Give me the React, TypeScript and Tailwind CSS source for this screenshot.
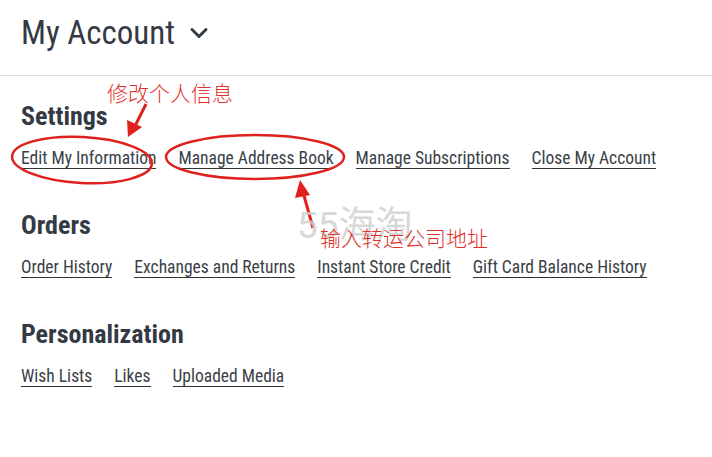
import { ChevronDown } from 'lucide-react';

const sections = [
  {
    title: 'Settings',
    links: ['Edit My Information', 'Manage Address Book', 'Manage Subscriptions', 'Close My Account'],
  },
  {
    title: 'Orders',
    links: ['Order History', 'Exchanges and Returns', 'Instant Store Credit', 'Gift Card Balance History'],
  },
  {
    title: 'Personalization',
    links: ['Wish Lists', 'Likes', 'Uploaded Media'],
  },
];

export default function App() {
  return (
    <div
      className="relative w-[712px] h-[457px] bg-white overflow-hidden text-[#333a44]"
      style={{ fontFamily: 'Roboto, "Noto Sans CJK SC", sans-serif' }}
    >
      {/* Header */}
      <div className="pl-[21px] pt-[12px] flex items-center h-[76px] border-b border-[#dcdcdc] pb-[22px]">
        <h1 className="text-[33px] leading-none font-stretch-condensed">My Account</h1>
        <ChevronDown className="ml-[10px] w-[28px] h-[28px] mt-[1px]" strokeWidth={2.5} />
      </div>

      {/* Sections */}
      <div className="pl-[21px] pt-[27px] flex flex-col gap-[43px]">
        {sections.map((s) => (
          <div key={s.title}>
            <h2 className="text-[26px] font-bold leading-[26px] font-stretch-condensed">{s.title}</h2>
            <div className="flex gap-[22px] mt-[20px]">
              {s.links.map((l) => (
                <a
                  key={l}
                  className="text-[17.5px] leading-[18px] font-stretch-condensed text-[#3a3f47] border-b border-[#333] pb-[1px] cursor-pointer"
                >
                  {l}
                </a>
              ))}
            </div>
          </div>
        ))}
      </div>

      {/* Annotation overlay */}
      <svg className="absolute inset-0 pointer-events-none" width="712" height="457">
        <ellipse cx="82" cy="160" rx="70" ry="23" fill="none" stroke="#e0201c" strokeWidth="2.5" transform="rotate(3 82 160)" />
        <ellipse cx="255" cy="157" rx="89" ry="22" fill="none" stroke="#e0201c" strokeWidth="2.5" />
        <line x1="146" y1="104" x2="134" y2="128" stroke="#e0201c" strokeWidth="3" />
        <polygon points="128,137 127,120 142,127" fill="#e0201c" />
        <line x1="313" y1="228" x2="303" y2="192" stroke="#e0201c" strokeWidth="3" />
        <polygon points="300,180 295,198 310,195" fill="#e0201c" />
      </svg>
      <div className="absolute left-[297px] top-[207px] text-[37px] leading-none text-[#cfcfcf] opacity-80">55海淘</div>
      <div className="absolute left-[107px] top-[84px] text-[21px] leading-none font-light text-[#e0302a]">修改个人信息</div>
      <div className="absolute left-[320px] top-[229px] text-[21px] leading-none font-light text-[#e0302a]">输入转运公司地址</div>
    </div>
  );
}
